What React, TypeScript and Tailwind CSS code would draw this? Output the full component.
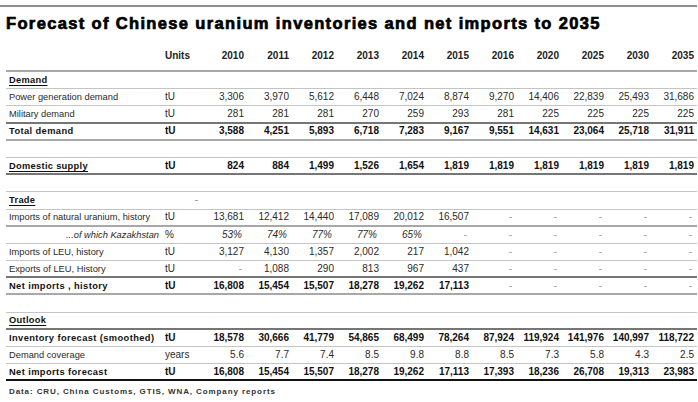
import React from "react";

type Kind = "plain" | "bold" | "section" | "blank" | "indent";

type Row = {
  label: string;
  units?: string;
  values?: string[];
  kind: Kind;
  line: string;
  mark?: boolean;
};

const years = ["2010", "2011", "2012", "2013", "2014", "2015", "2016", "2020", "2025", "2030", "2035"];

const thin = "border-b border-[#c4c4c4]";
const mid = "border-b-2 border-[#a8a8a8]";
const dark = "border-b-2 border-[#767676]";
const black = "border-b-2 border-[#111111]";

const dash = ["-", "-", "-", "-", "-"];

const rows: Row[] = [
  { label: "Demand", kind: "section", line: thin },
  {
    label: "Power generation demand",
    units: "tU",
    kind: "plain",
    line: thin,
    values: ["3,306", "3,970", "5,612", "6,448", "7,024", "8,874", "9,270", "14,406", "22,839", "25,493", "31,686"],
  },
  {
    label: "Military demand",
    units: "tU",
    kind: "plain",
    line: dark,
    values: ["281", "281", "281", "270", "259", "293", "281", "225", "225", "225", "225"],
  },
  {
    label: "Total demand",
    units: "tU",
    kind: "bold",
    line: mid,
    values: ["3,588", "4,251", "5,893", "6,718", "7,283", "9,167", "9,551", "14,631", "23,064", "25,718", "31,911"],
  },
  { label: "", kind: "blank", line: thin },
  {
    label: "Domestic supply",
    units: "tU",
    kind: "section",
    line: dark,
    values: ["824", "884", "1,499", "1,526", "1,654", "1,819", "1,819", "1,819", "1,819", "1,819", "1,819"],
  },
  { label: "", kind: "blank", line: thin },
  { label: "Trade", kind: "section", line: thin, mark: true },
  {
    label: "Imports of natural uranium, history",
    units: "tU",
    kind: "plain",
    line: mid,
    values: ["13,681", "12,412", "14,440", "17,089", "20,012", "16,507", ...dash],
  },
  {
    label: "...of which Kazakhstan",
    units: "%",
    kind: "indent",
    line: thin,
    values: ["53%", "74%", "77%", "77%", "65%", "-", ...dash],
  },
  {
    label: "Imports of LEU, history",
    units: "tU",
    kind: "plain",
    line: thin,
    values: ["3,127", "4,130", "1,357", "2,002", "217", "1,042", ...dash],
  },
  {
    label: "Exports of LEU, History",
    units: "tU",
    kind: "plain",
    line: dark,
    values: ["-", "1,088", "290", "813", "967", "437", ...dash],
  },
  {
    label: "Net imports , history",
    units: "tU",
    kind: "bold",
    line: mid,
    values: ["16,808", "15,454", "15,507", "18,278", "19,262", "17,113", ...dash],
  },
  { label: "", kind: "blank", line: thin },
  { label: "Outlook", kind: "section", line: dark },
  {
    label: "Inventory forecast (smoothed)",
    units: "tU",
    kind: "bold",
    line: thin,
    values: ["18,578", "30,666", "41,779", "54,865", "68,499", "78,264", "87,924", "119,924", "141,976", "140,997", "118,722"],
  },
  {
    label: "Demand coverage",
    units: "years",
    kind: "plain",
    line: thin,
    values: ["5.6", "7.7", "7.4", "8.5", "9.8", "8.8", "8.5", "7.3", "5.8", "4.3", "2.5"],
  },
  {
    label: "Net imports forecast",
    units: "tU",
    kind: "bold",
    line: black,
    values: ["16,808", "15,454", "15,507", "18,278", "19,262", "17,113", "17,393", "18,236", "26,708", "19,313", "23,983"],
  },
];

function Label({ row }: { row: Row }) {
  if (row.kind === "section") {
    return (
      <span className="font-bold underline underline-offset-[2px] decoration-1 tracking-[0.3px] text-[#111]">
        {row.label}
      </span>
    );
  }
  if (row.kind === "indent") {
    return <span className="w-full pr-[4px] text-right italic">{row.label}</span>;
  }
  if (row.kind === "bold") {
    return <span className="font-bold tracking-[0.4px] text-[#111]">{row.label}</span>;
  }
  return <span>{row.label}</span>;
}

function Value({ v, row }: { v: string; row: Row }) {
  if (v === "-") {
    return <div className="flex items-center justify-end pr-[2px] text-[#9a9a9a]">-</div>;
  }
  const strong = row.kind === "bold" || row.kind === "section";
  return (
    <div
      className={
        strong
          ? "flex items-center justify-end font-bold text-[#111]"
          : row.kind === "indent"
            ? "flex items-center justify-end pr-[2px] italic"
            : "flex items-center justify-end"
      }
    >
      {v}
    </div>
  );
}

export default function App() {
  return (
    <div className="w-[698px] h-[402px] bg-white overflow-hidden text-[#2a2a2a] font-['Liberation_Sans',Arial,sans-serif]">
      <div className="h-[5px]" />
      <div className="w-[697px] h-[2px] bg-[#8c8c8c]" />
      <h1 className="mt-[6px] ml-[6px] h-[20px] whitespace-nowrap text-[16.5px] leading-[20px] font-bold tracking-[1.35px] text-black [-webkit-text-stroke:0.7px_black]">
        Forecast of Chinese uranium inventories and net imports to 2035
      </h1>
      <div className="ml-[6px] w-[691px]">
        <div
          className={`grid grid-cols-[157px_36px_repeat(11,45px)] h-[39px] pt-[14px] pb-[7px] text-[10px] leading-[17px] font-bold text-[#222] ${mid}`}
        >
          <div />
          <div className="pl-[2px]">Units</div>
          {years.map((y) => (
            <div key={y} className="text-right">
              {y}
            </div>
          ))}
        </div>
        {rows.map((row, i) => (
          <div
            key={i}
            className={`grid grid-cols-[157px_36px_repeat(11,45px)] h-[17.2px] text-[10px] leading-[12px] ${row.line}`}
          >
            <div className="flex items-center pl-[3px] whitespace-nowrap text-[9.3px]">
              <Label row={row} />
            </div>
            <div
              className={
                row.mark
                  ? "flex items-center justify-end pr-[1px] text-[#888]"
                  : row.kind === "bold" || row.kind === "section"
                    ? "flex items-center pl-[2px] font-bold text-[#111]"
                    : "flex items-center pl-[2px]"
              }
            >
              {row.mark ? "-" : row.units}
            </div>
            {row.values?.map((v, j) => <Value key={j} v={v} row={row} />)}
          </div>
        ))}
      </div>
      <div className="ml-[9px] mt-[6px] text-[8px] leading-[10px] font-bold tracking-[0.9px] text-[#333]">
        Data: CRU, China Customs, GTIS, WNA, Company reports
      </div>
    </div>
  );
}
